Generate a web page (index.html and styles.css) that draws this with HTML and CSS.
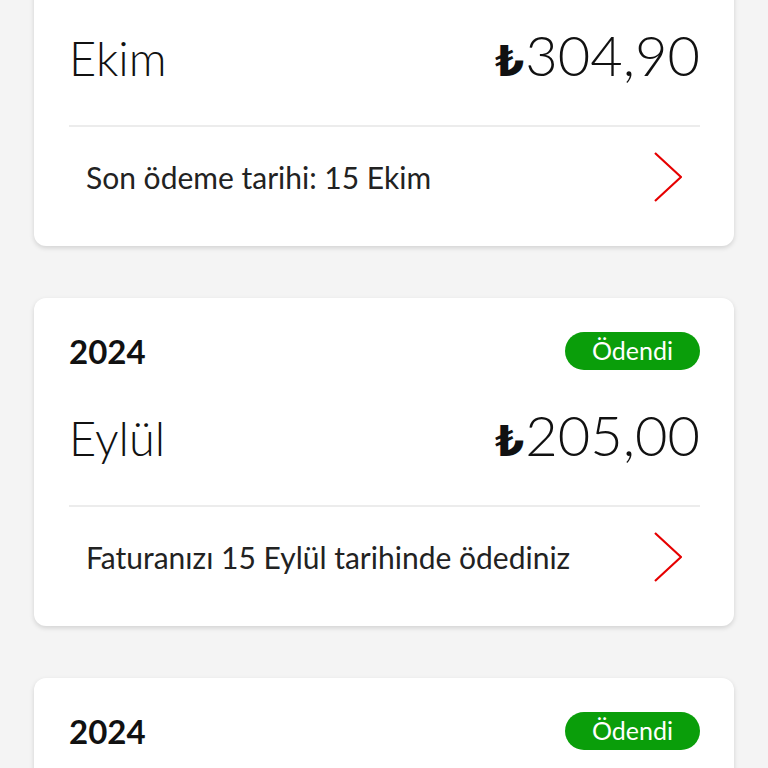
FILE: index.html
```html
<!DOCTYPE html>
<html lang="tr">
<head>
    <meta charset="UTF-8">
    <meta name="viewport" content="width=device-width, initial-scale=1.0">
    <title>Faturalarım</title>
    <link rel="stylesheet" href="styles.css">
</head>
<body>

    <!-- fatura listesi (sayfa aşağı kaydırılmış) -->
    <div class="bill-list">

        <div class="bill">
            <div class="bill-head">
                <span class="year">2024</span>
                <span class="badge unpaid">Ödenmedi</span>
            </div>
            <div class="bill-main">
                <span class="month">Ekim</span>
                <span class="amount"><span class="lira">₺</span>304,90</span>
            </div>
            <a href="#" class="bill-foot">
                <span>Son ödeme tarihi: 15 Ekim</span>
                <svg class="chevron" viewBox="0 0 28 50" width="28" height="50"><path d="M1 1 L27 25 L1 49"/></svg>
            </a>
        </div>

        <div class="bill">
            <div class="bill-head">
                <span class="year">2024</span>
                <span class="badge paid">Ödendi</span>
            </div>
            <div class="bill-main">
                <span class="month">Eylül</span>
                <span class="amount"><span class="lira">₺</span>205,00</span>
            </div>
            <a href="#" class="bill-foot">
                <span>Faturanızı 15 Eylül tarihinde ödediniz</span>
                <svg class="chevron" viewBox="0 0 28 50" width="28" height="50"><path d="M1 1 L27 25 L1 49"/></svg>
            </a>
        </div>

        <div class="bill">
            <div class="bill-head">
                <span class="year">2024</span>
                <span class="badge paid">Ödendi</span>
            </div>
            <div class="bill-main">
                <span class="month">Ağustos</span>
                <span class="amount"><span class="lira">₺</span>205,00</span>
            </div>
            <a href="#" class="bill-foot">
                <span>Faturanızı 15 Ağustos tarihinde ödediniz</span>
                <svg class="chevron" viewBox="0 0 28 50" width="28" height="50"><path d="M1 1 L27 25 L1 49"/></svg>
            </a>
        </div>

    </div>

</body>
</html>
```

FILE: styles.css
```css
body {
    margin: 0;
    padding: 0;
    font-family: Lato, "Liberation Sans", sans-serif;
    background-color: #f4f4f4;
    color: #111;
    overflow: hidden;
}

.bill-list {
    display: flex;
    flex-direction: column;
    gap: 52px;
    margin-top: -82px;
    padding: 0 34px;
}

.bill {
    background-color: #ffffff;
    border-radius: 12px;
    box-shadow: 0 2px 5px rgba(0, 0, 0, 0.14);
    padding: 34px 34px 0 35px;
}

.bill-head {
    display: flex;
    justify-content: space-between;
    align-items: center;
    height: 38px;
}

.year {
    font-size: 33px;
    font-weight: 700;
}

.badge {
    height: 38px;
    line-height: 36px;
    padding: 0 27px;
    border-radius: 19px;
    color: #ffffff;
    font-size: 25px;
}

.badge.paid {
    background-color: #0a9e0a;
}

.badge.unpaid {
    background-color: #e60000;
}

.bill-main {
    display: flex;
    justify-content: space-between;
    align-items: baseline;
    padding: 32px 0 30px;
    border-bottom: 2px solid #ececec;
}

.month {
    font-size: 47px;
    font-weight: 300;
    line-height: 66px;
}

.amount {
    font-size: 56px;
    font-weight: 300;
    line-height: 66px;
}

.lira {
    font-family: "DejaVu Sans", sans-serif;
    font-weight: 700;
    font-size: 42px;
    margin-right: 1px;
}

.bill-foot {
    display: flex;
    justify-content: space-between;
    align-items: center;
    padding: 25px 18px 44px 17px;
    color: #222;
    text-decoration: none;
    font-size: 30px;
}

.chevron path {
    fill: none;
    stroke: #e60000;
    stroke-width: 2.2;
}
```
